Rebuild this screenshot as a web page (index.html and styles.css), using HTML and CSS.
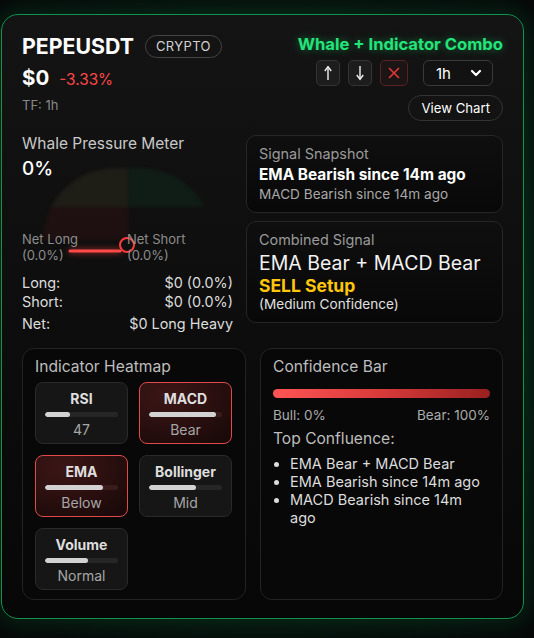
FILE: index.html
```html
<!DOCTYPE html>
<html lang="en">
<head>
<meta charset="utf-8">
<title>PEPEUSDT Whale + Indicator Combo</title>
<link rel="stylesheet" href="styles.css">
</head>
<body>
<div class="page">
  <div class="card">
    <header class="head">
      <div class="head-left">
        <div class="sym-row">
          <h1 class="sym">PEPEUSDT</h1>
          <span class="badge">CRYPTO</span>
        </div>
        <div class="price-row">
          <span class="price">$0</span>
          <span class="chg">-3.33%</span>
        </div>
        <div class="tf">TF: 1h</div>
      </div>
      <div class="head-right">
        <div class="combo">Whale + Indicator Combo</div>
        <div class="controls">
          <button class="icon-btn" aria-label="Up">
            <svg width="10" height="16" viewBox="0 0 10 16"><path d="M5 15 V2.5" stroke="#f2f2f2" stroke-width="1.4" fill="none"/><path d="M1.8 6 L5 1.6 L8.2 6" stroke="#f2f2f2" stroke-width="1.4" fill="none" stroke-linejoin="round"/></svg>
          </button>
          <button class="icon-btn" aria-label="Down">
            <svg width="10" height="16" viewBox="0 0 10 16"><path d="M5 1 V13.5" stroke="#f2f2f2" stroke-width="1.4" fill="none"/><path d="M1.8 10 L5 14.4 L8.2 10" stroke="#f2f2f2" stroke-width="1.4" fill="none" stroke-linejoin="round"/></svg>
          </button>
          <button class="icon-btn close-btn" aria-label="Close">
            <svg width="14" height="14" viewBox="0 0 14 14"><path d="M2 2 L12 12 M12 2 L2 12" stroke="#e53935" stroke-width="1.6" fill="none"/></svg>
          </button>
          <div class="select">
            <span>1h</span>
            <svg width="12" height="8" viewBox="0 0 12 8"><path d="M2 2 L6 6 L10 2" stroke="#ffffff" stroke-width="2.2" fill="none" stroke-linecap="round" stroke-linejoin="round"/></svg>
          </div>
        </div>
        <button class="view-btn">View Chart</button>
      </div>
    </header>

    <section class="mid">
      <div class="meter">
        <div class="meter-title">Whale Pressure Meter</div>
        <div class="meter-value">0%</div>
        <div class="gauge">
          <div class="dome"></div>
          <svg class="needle" width="80" height="24" viewBox="0 0 80 24">
            <line x1="2" y1="18" x2="52" y2="18" stroke="#ff4a4a" stroke-width="3" stroke-linecap="round" class="needle-line"/>
            <circle cx="59" cy="12" r="7" stroke="#ff3b3b" stroke-width="2" fill="none"/>
          </svg>
          <div class="gauge-labels">
            <div class="g-label g-long">Net Long<br>(0.0%)</div>
            <div class="g-label">Net Short<br>(0.0%)</div>
          </div>
        </div>
        <div class="stats">
          <div class="stat"><span>Long:</span><span>$0 (0.0%)</span></div>
          <div class="stat"><span>Short:</span><span>$0 (0.0%)</span></div>
          <div class="stat stat-net"><span>Net:</span><span>$0 Long Heavy</span></div>
        </div>
      </div>

      <div class="signals">
        <div class="sig-card">
          <div class="sig-title">Signal Snapshot</div>
          <div class="sig-main">EMA Bearish since 14m ago</div>
          <div class="sig-sub">MACD Bearish since 14m ago</div>
        </div>
        <div class="sig-card">
          <div class="sig-title">Combined Signal</div>
          <div class="comb-main">EMA Bear + MACD Bear</div>
          <div class="comb-sell">SELL Setup</div>
          <div class="comb-conf">(Medium Confidence)</div>
        </div>
      </div>
    </section>

    <section class="bottom">
      <div class="panel heat">
        <div class="panel-title">Indicator Heatmap</div>
        <div class="tiles">
          <div class="tile">
            <div class="tile-name">RSI</div>
            <div class="track"><div class="fill" style="width:34%"></div></div>
            <div class="tile-val">47</div>
          </div>
          <div class="tile tile-hot">
            <div class="tile-name">MACD</div>
            <div class="track"><div class="fill" style="width:92%"></div></div>
            <div class="tile-val">Bear</div>
          </div>
          <div class="tile tile-hot">
            <div class="tile-name">EMA</div>
            <div class="track"><div class="fill" style="width:79%"></div></div>
            <div class="tile-val">Below</div>
          </div>
          <div class="tile">
            <div class="tile-name">Bollinger</div>
            <div class="track"><div class="fill" style="width:64%"></div></div>
            <div class="tile-val">Mid</div>
          </div>
          <div class="tile">
            <div class="tile-name">Volume</div>
            <div class="track"><div class="fill" style="width:59%"></div></div>
            <div class="tile-val">Normal</div>
          </div>
        </div>
      </div>

      <div class="panel conf">
        <div class="panel-title">Confidence Bar</div>
        <div class="conf-bar"></div>
        <div class="conf-legend"><span>Bull: 0%</span><span>Bear: 100%</span></div>
        <div class="conf-head">Top Confluence:</div>
        <ul class="conf-list">
          <li>EMA Bear + MACD Bear</li>
          <li>EMA Bearish since 14m ago</li>
          <li>MACD Bearish since 14m ago</li>
        </ul>
      </div>
    </section>
  </div>
</div>
</body>
</html>
```

FILE: styles.css
```css
* { box-sizing: border-box; }

html, body {
  margin: 0;
  padding: 0;
}

body {
  background: #080a09;
  font-family: Inter, "Noto Sans", "Liberation Sans", sans-serif;
  color: #e6e6e6;
  width: 534px;
  height: 638px;
  overflow: hidden;
}

.page {
  padding: 14px 10px 0 1px;
  background: radial-gradient(ellipse 70% 60% at 50% 50%, #0a2218 0%, #07140e 60%, #060808 100%);
  height: 638px;
}

.card {
  width: 523px;
  border: 1px solid #12914f;
  border-radius: 17px;
  background: linear-gradient(180deg, #141414 0%, #0c0c0c 60%, #070707 100%);
  padding: 19px 20px 18px 20px;
  box-shadow: 0 0 26px 4px rgba(10, 140, 75, 0.25);
}

/* Header */
.head {
  display: flex;
  justify-content: space-between;
  align-items: flex-start;
}

.sym-row {
  display: flex;
  align-items: center;
  gap: 11px;
  height: 24px;
}

.sym {
  margin: 0;
  font-size: 21.3px;
  font-weight: 700;
  color: #ffffff;
  line-height: 24px;
}

.badge {
  height: 23px;
  padding: 0 10px;
  border: 1px solid #444;
  border-radius: 12px;
  font-size: 13px;
  letter-spacing: 0.4px;
  color: #d2d2d2;
  display: flex;
  align-items: center;
}

.price-row {
  margin-top: 7px;
  display: flex;
  align-items: baseline;
  gap: 10px;
  line-height: 26px;
}

.price {
  font-size: 20.5px;
  font-weight: 700;
  color: #fff;
}

.chg {
  font-size: 15.3px;
  color: #ff4747;
}

.tf {
  margin-top: 4px;
  font-size: 13px;
  line-height: 16px;
  color: #8a8a8a;
}

.head-right {
  display: flex;
  flex-direction: column;
  align-items: flex-end;
}

.combo {
  font-size: 16.6px;
  font-weight: 700;
  line-height: 20px;
  color: #22e57a;
  text-shadow: 0 0 8px rgba(34, 229, 122, 0.45);
}

.controls {
  margin-top: 6px;
  display: flex;
  align-items: center;
  gap: 8px;
  margin-right: 10px;
}

.icon-btn {
  width: 24px;
  height: 26px;
  padding: 0;
  border: 1px solid #343434;
  border-radius: 5px;
  background: #1d1d1d;
  display: flex;
  align-items: center;
  justify-content: center;
}

.close-btn {
  width: 28px;
  border-color: #5a2222;
  background: #1b1515;
}

.select {
  margin-left: 7px;
  width: 70px;
  height: 26px;
  border: 1px solid #3a3a3a;
  border-radius: 6px;
  background: #121212;
  display: flex;
  align-items: center;
  justify-content: space-between;
  padding: 0 10px 0 12px;
  font-size: 15px;
  color: #fff;
}

.view-btn {
  margin-top: 9px;
  height: 26px;
  padding: 0 12px;
  border: 1px solid #333;
  border-radius: 13px;
  background: #131313;
  color: #fff;
  font-family: Inter, "Noto Sans", sans-serif;
  font-size: 13.2px;
}

/* Middle */
.mid {
  margin-top: 14px;
  display: grid;
  grid-template-columns: 211px 1fr;
  gap: 13px;
  align-items: start;
}

.meter-title {
  font-size: 15.5px;
  line-height: 18px;
  color: #c8c8c8;
}

.meter-value {
  margin-top: 4px;
  font-size: 19px;
  font-weight: 500;
  line-height: 24px;
  color: #fff;
}

.gauge {
  position: relative;
  margin-top: -13px;
}

.dome {
  position: absolute;
  left: 21px;
  top: 0;
  width: 170px;
  height: 72px;
  border-radius: 85px 85px 0 0;
  background:
    linear-gradient(180deg, rgba(16, 110, 60, 0.12) 0 54%, transparent 54%),
    linear-gradient(90deg, rgba(120, 22, 22, 0.15) 0 50%, transparent 50%);
  filter: blur(1.5px);
}

.needle {
  position: absolute;
  left: 46px;
  top: 65px;
  overflow: visible;
}

.needle-line {
  filter: drop-shadow(0 0 3px rgba(255, 60, 60, 0.8));
}

.gauge-labels {
  position: relative;
  display: flex;
  padding-top: 63px;
}

.g-label {
  font-size: 13px;
  line-height: 16px;
  color: #8c8c8c;
}

.g-long {
  width: 105px;
}

.stats {
  margin-top: 10px;
}

.stat {
  display: flex;
  justify-content: space-between;
  font-size: 14.4px;
  line-height: 19px;
  color: #dcdcdc;
}

.stat-net {
  margin-top: 3px;
}

.signals {
  display: flex;
  flex-direction: column;
  gap: 8px;
}

.sig-card {
  border: 1px solid #262626;
  border-radius: 10px;
  background: linear-gradient(180deg, #0f0f0f 0%, #080808 100%);
  padding: 9px 12px 9px 12px;
}

.sig-title {
  font-size: 14.4px;
  line-height: 18px;
  color: #9a9a9a;
}

.sig-main {
  margin-top: 2px;
  font-size: 15.4px;
  font-weight: 700;
  line-height: 20px;
  color: #fff;
}

.sig-sub {
  font-size: 13.6px;
  line-height: 18px;
  color: #a8a8a8;
}

.comb-main {
  font-size: 19.5px;
  line-height: 28px;
  color: #f2f2f2;
}

.comb-sell {
  font-size: 17.5px;
  font-weight: 700;
  line-height: 18px;
  color: #ffc60a;
}

.comb-conf {
  font-size: 13.6px;
  line-height: 18px;
  color: #e0e0e0;
}

/* Bottom */
.bottom {
  margin-top: 15px;
  display: grid;
  grid-template-columns: 224px 1fr;
  gap: 14px;
}

.panel {
  border: 1px solid #232323;
  border-radius: 12px;
  background: #080808;
  height: 252px;
  padding: 9px 12px 10px 12px;
}

.panel-title {
  font-size: 15.6px;
  line-height: 18px;
  color: #bdbdbd;
}

.tiles {
  margin-top: 6px;
  display: grid;
  grid-template-columns: 93px 93px;
  gap: 11px;
}

.tile {
  height: 62px;
  border: 1px solid #2a2a2a;
  border-radius: 8px;
  background: #161616;
  padding: 7px 9px 0 9px;
  text-align: center;
}

.tile-hot {
  border-color: #e04a4a;
  background: radial-gradient(ellipse 90% 90% at 30% 20%, #3c1616 0%, #2a0f0f 60%, #1c0a0a 100%);
}

.tile-name {
  font-size: 14px;
  font-weight: 700;
  line-height: 18px;
  color: #dedede;
}

.track {
  margin-top: 4px;
  height: 5px;
  border-radius: 3px;
  background: #262626;
  overflow: hidden;
}

.tile-hot .track {
  background: #3a1c1c;
}

.fill {
  height: 100%;
  border-radius: 3px;
  background: #d2d2d2;
}

.tile-val {
  margin-top: 5px;
  font-size: 14px;
  line-height: 16px;
  color: #a6a6a6;
}

.conf-bar {
  margin-top: 13px;
  height: 9px;
  border-radius: 5px;
  background: linear-gradient(90deg, #ff5454 0%, #d83a3a 50%, #9a2020 100%);
}

.conf-legend {
  margin-top: 8px;
  display: flex;
  justify-content: space-between;
  font-size: 13.5px;
  line-height: 18px;
  color: #ababab;
}

.conf-head {
  margin-top: 6px;
  font-size: 15.6px;
  line-height: 18px;
  color: #bdbdbd;
}

.conf-list {
  margin: 7px 0 0 0;
  padding: 0 8px 0 17px;
  font-size: 14.5px;
  line-height: 18px;
  color: #dcdcdc;
}
```
